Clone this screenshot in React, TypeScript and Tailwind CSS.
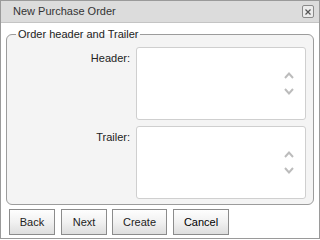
// New Purchase Order dialog -- header/trailer step of a small wizard.

function Chevron({ up }: { up?: boolean }) {
  return (
    <svg width="10" height="7" viewBox="0 0 10 7" className="block">
      <path
        d={up ? "M1 6 L5 1.6 L9 6" : "M1 1 L5 5.4 L9 1"}
        fill="none"
        stroke="#bcbcbc"
        strokeWidth="2"
      />
    </svg>
  );
}

function TextBox({ name }: { name: string }) {
  return (
    <div className="flex h-[73px] w-[170px] rounded-[3px] border border-[#cfcfcf] bg-white">
      <textarea
        name={name}
        className="flex-1 resize-none bg-transparent outline-none"
      />
      <div className="flex flex-col items-center justify-center gap-[9px] pr-[11px]">
        <Chevron up />
        <Chevron />
      </div>
    </div>
  );
}

function Row({ label, name }: { label: string; name: string }) {
  return (
    <div className="flex items-start">
      <label className="w-[123px] pt-[4px] text-right leading-[14px] text-[#222]">
        {label}
      </label>
      <div className="ml-[6px]">
        <TextBox name={name} />
      </div>
    </div>
  );
}

const buttonClass =
  "h-[26px] border border-[#8c8c8c] bg-linear-to-b from-[#fefefe] via-[#f1f1f1] to-[#dedede] text-[11px] leading-none";

export default function App() {
  return (
    <div className="flex h-[239px] w-[320px] flex-col border border-[#9a9a9a] bg-white font-['Liberation_Sans',Arial,sans-serif] text-[11px]">
      <div className="flex h-[22px] shrink-0 items-center justify-between border-b border-[#c4c4c4] bg-[#dcdcdc] pl-[12px] pr-[5px]">
        <span className="text-[#333]">New Purchase Order</span>
        <button className="flex h-[13px] w-[12px] items-center justify-center rounded-[2px] border border-[#8a8a8a] bg-[#ececec]">
          <svg width="6" height="6" viewBox="0 0 6 6">
            <path d="M0.5 0.5 L5.5 5.5 M5.5 0.5 L0.5 5.5" stroke="#555" strokeWidth="1.2" />
          </svg>
        </button>
      </div>

      <div className="px-[5px] pt-[4px]">
        <fieldset className="rounded-[6px] border border-[#9c9c9c] bg-[#f4f4f4] pr-[7px] pb-[5px]">
          <legend className="ml-[9px] px-[2px] leading-[14px] text-[#222]">
            Order header and Trailer
          </legend>
          <div className="flex flex-col gap-[6px] pt-[6px]">
            <Row label="Header:" name="header" />
            <Row label="Trailer:" name="trailer" />
          </div>
        </fieldset>
      </div>

      <div className="flex pl-[8px] pt-[4px]">
        <button className={`${buttonClass} w-[46px] text-[#222]`}>Back</button>
        <button className={`${buttonClass} ml-[6px] w-[46px] text-[#222]`}>Next</button>
        <button className={`${buttonClass} ml-[5px] w-[55px] text-[#222]`}>Create</button>
        <button className={`${buttonClass} ml-[6px] w-[56px] text-black`}>Cancel</button>
      </div>
    </div>
  );
}
